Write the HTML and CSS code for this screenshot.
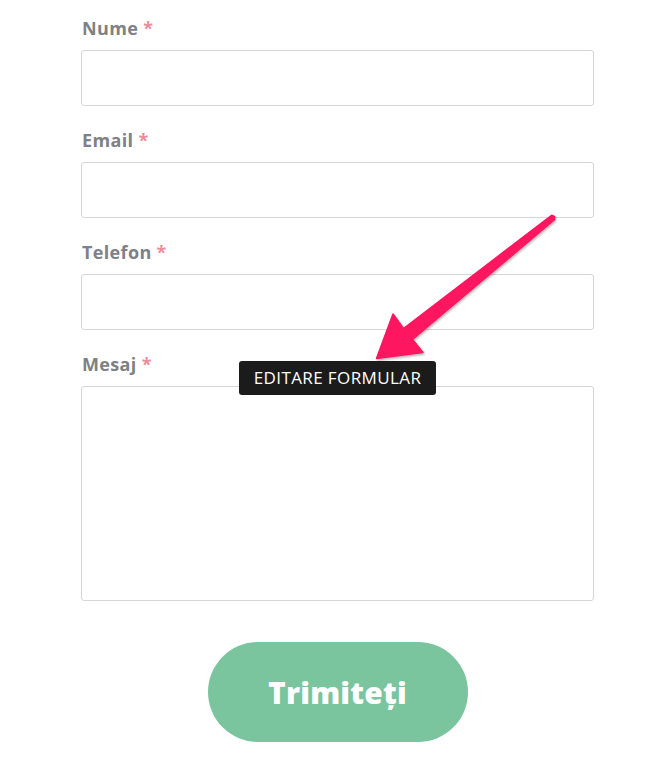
FILE: index.html
```html
<!DOCTYPE html>
<html lang="ro">
<head>
<meta charset="utf-8">
<title>Formular</title>
<link rel="stylesheet" href="styles.css">
</head>
<body>
<div class="page">
  <form class="form">
    <div class="field">
      <label class="label">Nume <span class="req">*</span></label>
      <div class="input"></div>
    </div>
    <div class="field">
      <label class="label">Email <span class="req">*</span></label>
      <div class="input"></div>
    </div>
    <div class="field">
      <label class="label">Telefon <span class="req">*</span></label>
      <div class="input"></div>
    </div>
    <div class="field">
      <label class="label">Mesaj <span class="req">*</span></label>
      <div class="input textarea"></div>
    </div>
    <div class="actions">
      <button type="button" class="submit">Trimiteți</button>
    </div>
  </form>
  <div class="tooltip">EDITARE FORMULAR</div>
  <svg class="arrow" width="670" height="758" viewBox="0 0 670 758">
    <defs>
      <filter id="sh" x="-20%" y="-20%" width="140%" height="140%">
        <feDropShadow dx="1" dy="1.5" stdDeviation="1.2" flood-color="#000" flood-opacity="0.3"/>
      </filter>
    </defs>
    <path filter="url(#sh)" fill="#ff1460" stroke="#ff1460" stroke-width="1.5" stroke-linejoin="round"
      d="M551.6 215.3 L403.5 328.5 L393 314 L376.5 358.5 L423 352.5 L412.5 339.5 L554.4 219.7 Q555.8 216 551.6 215.3 Z"/>
  </svg>
</div>
</body>
</html>
```

FILE: styles.css
```css
html, body {
  margin: 0;
  padding: 0;
  background: #ffffff;
}
.page {
  position: relative;
  width: 670px;
  height: 758px;
  overflow: hidden;
}
.form {
  padding: 16px 0 0 81px;
  width: 513px;
  display: flex;
  flex-direction: column;
}
.field {
  display: flex;
  flex-direction: column;
  margin-bottom: 22px;
}
.label {
  font-family: "Open Sans", sans-serif;
  font-weight: 700;
  font-size: 18px;
  letter-spacing: 0.35px;
  line-height: 24px;
  color: #7e8185;
  margin: 0 0 10px 1px;
}
.req {
  color: #ee8a99;
}
.input {
  height: 54px;
  border: 1px solid #d6d6d6;
  border-radius: 3px;
  background: #fff;
}
.textarea {
  height: 213px;
}
.actions {
  display: flex;
  justify-content: center;
  margin-top: 19px;
}
.submit {
  width: 260px;
  height: 100px;
  border: none;
  border-radius: 50px;
  background: #7ac49e;
  color: #fff;
  font-family: "Open Sans", sans-serif;
  font-weight: 800;
  font-size: 30px;
  letter-spacing: 0.2px;
  padding: 0;
}
.tooltip {
  position: absolute;
  left: 239px;
  top: 361px;
  width: 197px;
  height: 34px;
  box-sizing: border-box;
  background: #1b1b1b;
  border-radius: 3px;
  color: #fff;
  font-family: "Open Sans", sans-serif;
  font-size: 17px;
  letter-spacing: 0.4px;
  line-height: 34px;
  text-align: center;
}
.arrow {
  position: absolute;
  left: 0;
  top: 0;
}
```
